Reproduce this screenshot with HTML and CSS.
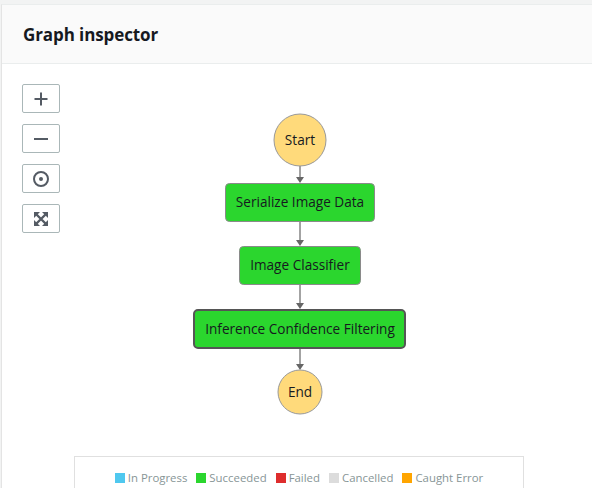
FILE: index.html
```html
<!DOCTYPE html>
<html>
<head>
<meta charset="utf-8">
<link rel="stylesheet" href="styles.css">
</head>
<body>
<div class="panel">
  <div class="header"><h2 class="title">Graph inspector</h2></div>
  <div class="content">
    <div class="controls">
      <button class="ctl" aria-label="Zoom in"><svg width="16" height="16" viewBox="0 0 16 16"><path d="M8 1.5v13M1.5 8h13" stroke="#545b64" stroke-width="2" fill="none"/></svg></button>
      <button class="ctl" aria-label="Zoom out"><svg width="16" height="16" viewBox="0 0 16 16"><path d="M1 8h14" stroke="#545b64" stroke-width="2" fill="none"/></svg></button>
      <button class="ctl" aria-label="Center"><svg width="18" height="18" viewBox="0 0 18 18"><circle cx="9" cy="9" r="7" stroke="#545b64" stroke-width="2" fill="none"/><circle cx="9" cy="9" r="2" fill="#545b64"/></svg></button>
      <button class="ctl" aria-label="Fit"><svg width="14" height="14" viewBox="0 0 14 14"><g fill="#545b64"><path d="M0 0h6L0 6z"/><path d="M14 0v6L8 0z"/><path d="M0 14v-6L6 14z"/><path d="M14 14h-6L14 8z"/></g><path d="M2 2L12 12M12 2L2 12" stroke="#545b64" stroke-width="2.4"/></svg></button>
    </div>
    <svg class="graph" width="590" height="393" viewBox="2 64 590 393">
      <g stroke="#666" stroke-width="1.2">
        <line x1="300" y1="166" x2="300" y2="178"/>
        <line x1="300" y1="221" x2="300" y2="241"/>
        <line x1="300" y1="284" x2="300" y2="304"/>
        <line x1="300" y1="348" x2="300" y2="365"/>
      </g>
      <g fill="#666">
        <path d="M296 177h8l-4 6z"/>
        <path d="M296 240h8l-4 6z"/>
        <path d="M296 303h8l-4 6z"/>
        <path d="M296 364h8l-4 6z"/>
      </g>
      <circle cx="300" cy="140" r="26" fill="#ffda7b" stroke="#999" stroke-width="1"/>
      <text x="300" y="145" class="lbl">Start</text>
      <rect x="225.5" y="183.5" width="149" height="38" rx="4" fill="#2bd62e" stroke="#8a8a8a" stroke-width="1"/>
      <text x="300" y="207" class="lbl">Serialize Image Data</text>
      <rect x="239.5" y="246.5" width="121" height="38" rx="4" fill="#2bd62e" stroke="#8a8a8a" stroke-width="1"/>
      <text x="300" y="270" class="lbl">Image Classifier</text>
      <rect x="194" y="310" width="211" height="38" rx="4" fill="#2bd62e" stroke="#555" stroke-width="2"/>
      <text x="300" y="334" class="lbl">Inference Confidence Filtering</text>
      <circle cx="300" cy="392" r="22" fill="#ffda7b" stroke="#999" stroke-width="1"/>
      <text x="300" y="397" class="lbl">End</text>
    </svg>
    <div class="legend">
      <span class="item"><i class="sw prog"></i>In Progress</span>
      <span class="item"><i class="sw ok"></i>Succeeded</span>
      <span class="item"><i class="sw fail"></i>Failed</span>
      <span class="item"><i class="sw cancel"></i>Cancelled</span>
      <span class="item"><i class="sw caught"></i>Caught Error</span>
    </div>
  </div>
</div>
</body>
</html>
```
FILE: styles.css
```css
html, body {
  margin: 0;
  padding: 0;
  background: #f2f3f3;
  font-family: "Open Sans", "Noto Sans", sans-serif;
  overflow: hidden;
}
.panel {
  margin-top: 4px;
  margin-left: 1px;
  border-left: 1px solid #e4e4e4;
  border-top: 1px solid #eaeded;
  background: #fff;
  height: 600px;
}
.header {
  background: #fafafa;
  border-bottom: 1px solid #eaeded;
  height: 59px;
  display: flex;
  align-items: center;
  padding-left: 21px;
  box-sizing: border-box;
}
.title {
  margin: 0;
  font-size: 17px;
  font-weight: 700;
  color: #16191f;
  letter-spacing: -0.1px;
}
.content {
  position: relative;
  height: 393px;
  padding-top: 20px;
  box-sizing: border-box;
}
.controls {
  display: flex;
  flex-direction: column;
  gap: 11px;
  padding-left: 20px;
  position: relative;
  z-index: 1;
  width: 40px;
}
.ctl {
  width: 38px;
  height: 29px;
  border: 1px solid #aab7b8;
  border-radius: 2px;
  background: #fff;
  display: flex;
  align-items: center;
  justify-content: center;
  padding: 0;
}
.graph {
  position: absolute;
  left: 0;
  top: 0;
}
.lbl {
  font-family: "Open Sans", "Noto Sans", sans-serif;
  font-size: 13.6px;
  fill: #16191f;
  text-anchor: middle;
}
.legend {
  position: absolute;
  left: 72px;
  top: 392px;
  width: 450px;
  height: 40px;
  border: 1px solid #e0e0e0;
  background: #fff;
  display: flex;
  justify-content: center;
  align-items: flex-start;
  padding-top: 13px;
  box-sizing: border-box;
  gap: 9px;
  font-size: 11.4px;
  color: #879596;
}
.item {
  display: flex;
  align-items: center;
  gap: 3px;
}
.sw {
  display: inline-block;
  width: 10px;
  height: 10px;
}
.prog { background: #4fc8ef; }
.ok { background: #2bd62e; }
.fail { background: #de2d2d; }
.cancel { background: #dcdcdc; }
.caught { background: #ffa500; }
```
